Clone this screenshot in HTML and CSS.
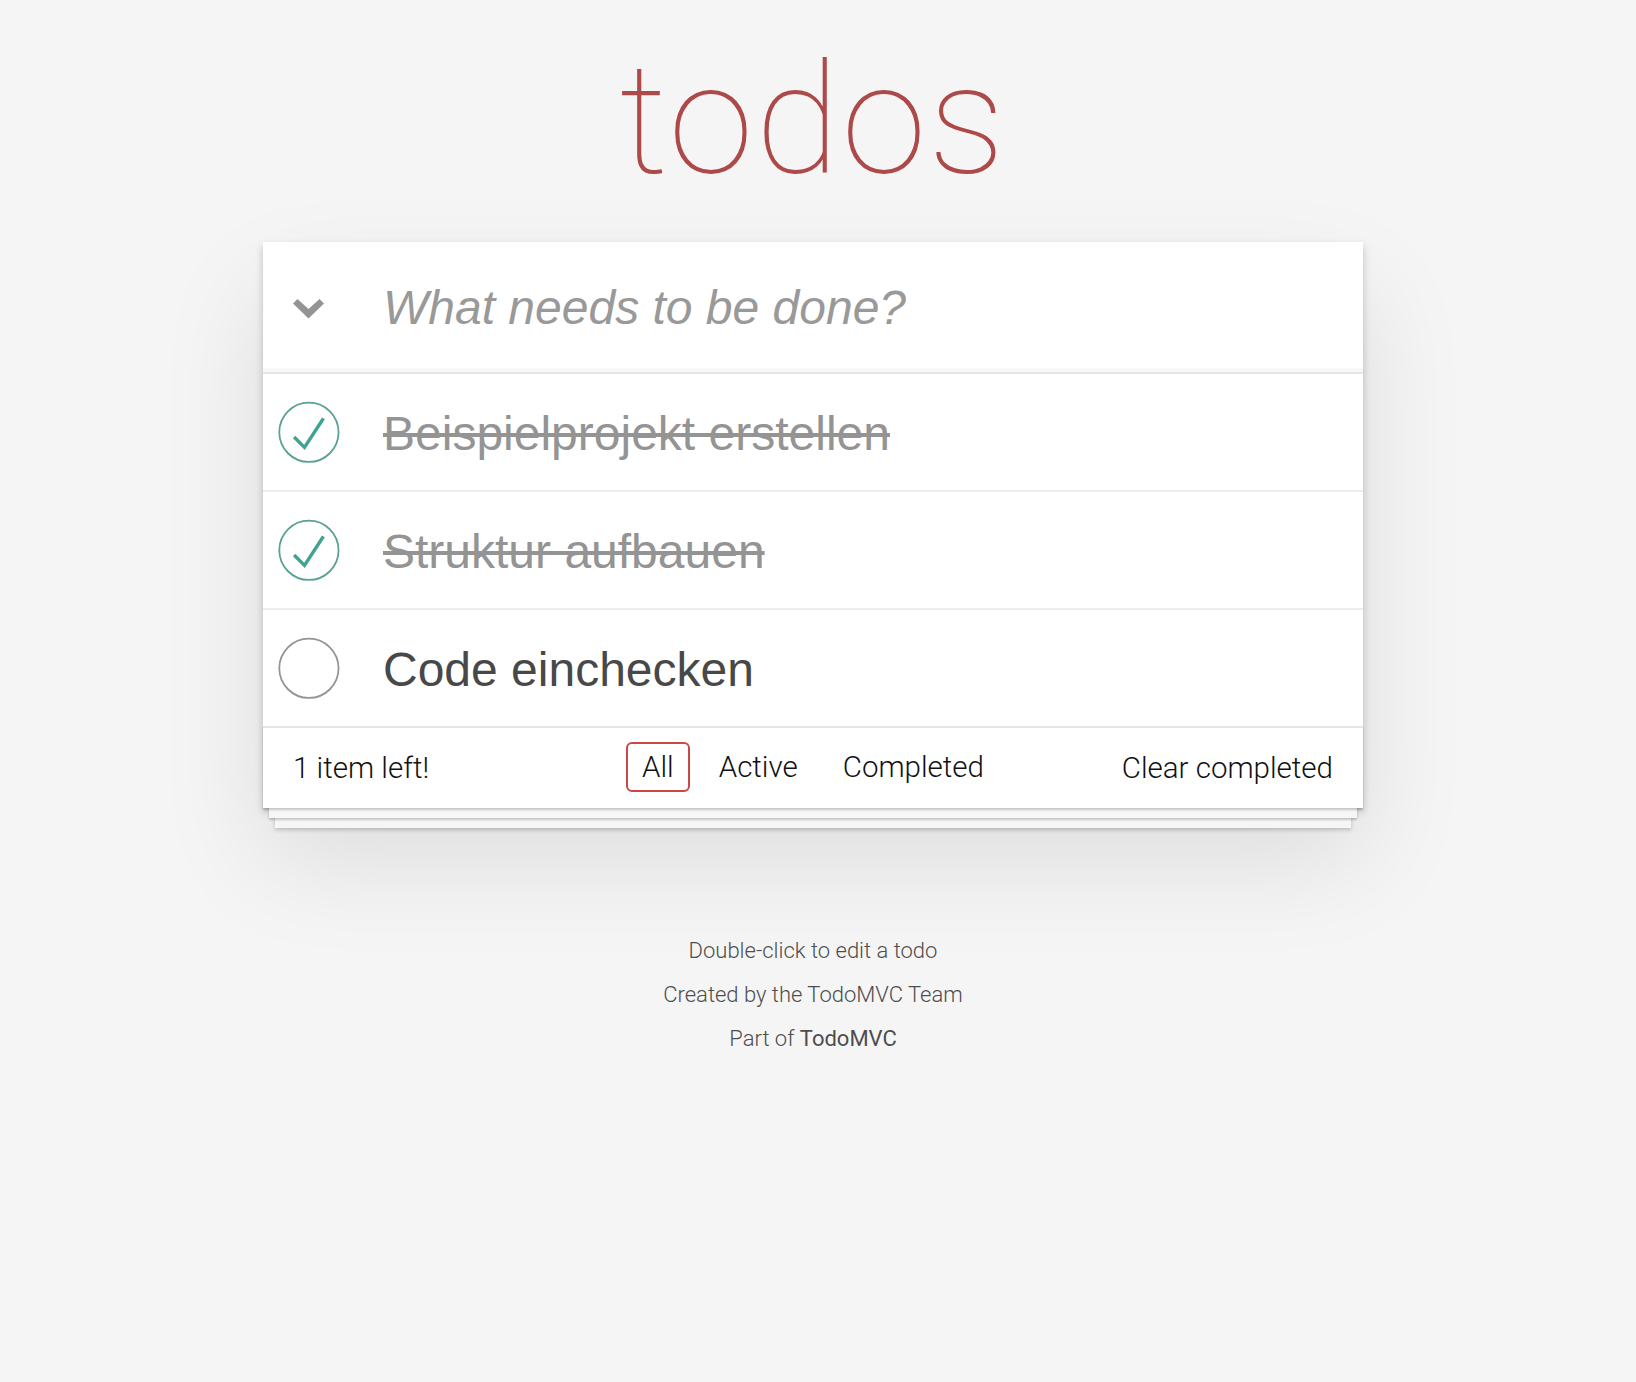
FILE: index.html
```html
<!DOCTYPE html>
<html lang="de">
<head>
<meta charset="utf-8">
<title>todos</title>
<link rel="stylesheet" href="styles.css">
</head>
<body>
<div class="page">
  <section class="todoapp">
    <h1 class="title">todos</h1>
    <div class="card">
      <header class="new-row">
        <span class="toggle-all">
          <svg width="31" height="20" viewBox="0 0 31 20"><polygon points="0,4.5 4.5,0 15.5,10 26.5,0 31,4.5 15.5,19.5" fill="#949494"/></svg>
        </span>
        <input class="new-todo" type="text" placeholder="What needs to be done?">
      </header>
      <ul class="todo-list">
        <li class="todo completed">
          <span class="toggle">
            <svg width="80" height="80" viewBox="-10 -18 100 135"><circle cx="50" cy="50" r="50" fill="none" stroke="#59A193" stroke-width="3"/><path fill="#3EA390" d="M72 25L42 71 27 56l-4 4 20 20 34-52z"/></svg>
          </span>
          <span class="label">Beispielprojekt erstellen</span>
        </li>
        <li class="todo completed">
          <span class="toggle">
            <svg width="80" height="80" viewBox="-10 -18 100 135"><circle cx="50" cy="50" r="50" fill="none" stroke="#59A193" stroke-width="3"/><path fill="#3EA390" d="M72 25L42 71 27 56l-4 4 20 20 34-52z"/></svg>
          </span>
          <span class="label">Struktur aufbauen</span>
        </li>
        <li class="todo">
          <span class="toggle">
            <svg width="80" height="80" viewBox="-10 -18 100 135"><circle cx="50" cy="50" r="50" fill="none" stroke="#949494" stroke-width="3"/></svg>
          </span>
          <span class="label">Code einchecken</span>
        </li>
      </ul>
      <footer class="footer">
        <span class="todo-count">1 item left!</span>
        <ul class="filters">
          <li><a class="filter selected" href="#/">All</a></li>
          <li><a class="filter" href="#/active">Active</a></li>
          <li><a class="filter" href="#/completed">Completed</a></li>
        </ul>
        <span class="clear-completed">Clear completed</span>
      </footer>
    </div>
  </section>
  <footer class="info">
    <p>Double-click to edit a todo</p>
    <p>Created by the TodoMVC Team</p>
    <p>Part of <a href="#">TodoMVC</a></p>
  </footer>
</div>
</body>
</html>
```

FILE: styles.css
```css
html, body {
  margin: 0;
  padding: 0;
}

body {
  background: #f5f5f5;
  color: #111111;
  font-family: Roboto, "Liberation Sans", Arial, sans-serif;
  font-weight: 300;
  font-size: 28px;
  line-height: 39.2px;
  padding-right: 10px;
}

.page {
  width: 1100px;
  margin: 0 auto;
}

.todoapp {
  padding-top: 44px;
}

.title {
  margin: 0 0 44px;
  font-family: Roboto, "Liberation Sans", sans-serif;
  font-size: 154px;
  line-height: 154px;
  letter-spacing: 2px;
  font-weight: 100;
  text-align: center;
  color: #ad4949;
}

.card {
  background: #ffffff;
  box-shadow: 0 4px 8px 0 rgba(0, 0, 0, 0.2), 0 50px 100px 0 rgba(0, 0, 0, 0.1);
}

.new-row {
  display: grid;
  grid-template-columns: 120px 1fr;
  align-items: center;
  height: 130px;
  box-shadow: inset 0 -4px 2px rgba(0, 0, 0, 0.03);
}

.toggle-all {
  display: flex;
  margin-left: 30px;
  margin-top: 4px;
}

.new-todo {
  border: none;
  outline: none;
  padding: 0;
  margin: 0;
  background: transparent;
  font-family: "Liberation Sans", Arial, sans-serif;
  font-size: 48px;
  line-height: 67px;
  height: 67px;
  color: #484848;
  width: 100%;
}

.new-todo::placeholder {
  font-style: italic;
  font-weight: 400;
  color: #999999;
}

.todo-list {
  margin: 0;
  padding: 0;
  list-style: none;
  border-top: 2px solid #e6e6e6;
}

.todo {
  display: grid;
  grid-template-columns: 120px 1fr;
  align-items: center;
  border-bottom: 2px solid #ededed;
}

.todo:last-child {
  border-bottom: none;
}

.toggle {
  display: flex;
  height: 80px;
}

.label {
  font-family: "Liberation Sans", Arial, sans-serif;
  font-size: 48px;
  font-weight: 400;
  line-height: 56px;
  padding: 32px 30px 28px 0;
  color: #484848;
}

.todo.completed .label {
  color: #949494;
  text-decoration: line-through;
}

.footer {
  display: grid;
  grid-template-columns: 1fr auto 1fr;
  align-items: center;
  height: 40px;
  padding: 20px 30px;
  border-top: 2px solid #e6e6e6;
  font-size: 29.5px;
  line-height: 40px;
  box-shadow: 0 2px 2px rgba(0, 0, 0, 0.2),
    0 16px 0 -6px #f6f6f6,
    0 18px 2px -6px rgba(0, 0, 0, 0.2),
    0 32px 0 -12px #f6f6f6,
    0 34px 4px -12px rgba(0, 0, 0, 0.2);
}

.todo-count {
  justify-self: start;
  margin-top: -4px;
}

.filters {
  display: flex;
  gap: 13px;
  margin: -6px 0 0;
  padding: 0;
  list-style: none;
}

.filter {
  display: block;
  padding: 6px 14px;
  line-height: 34px;
  border: 2px solid transparent;
  border-radius: 6px;
  color: inherit;
  text-decoration: none;
}

.filter.selected {
  border-color: #ce4646;
}

.clear-completed {
  justify-self: end;
  margin-top: -4px;
}

.info {
  margin-top: 132px;
  color: #4d4d4d;
  font-size: 22px;
  line-height: 22px;
  text-align: center;
  text-shadow: 0 1px 0 rgba(255, 255, 255, 0.5);
}

.info p {
  margin: 0 0 22px;
}

.info a {
  color: inherit;
  font-weight: 400;
  text-decoration: none;
}
```
